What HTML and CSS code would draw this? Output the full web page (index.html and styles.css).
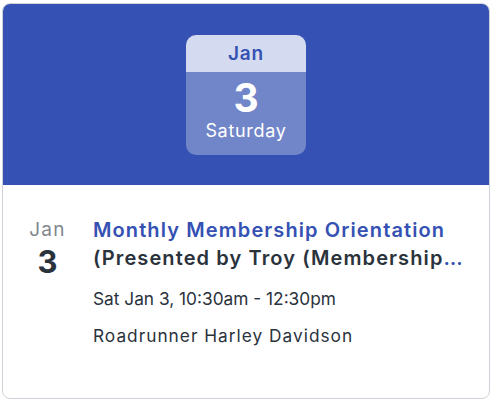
FILE: index.html
```html
<!DOCTYPE html>
<html>
<head>
<meta charset="utf-8">
<link rel="stylesheet" href="styles.css">
</head>
<body>
<div class="card">
  <div class="hero">
    <div class="cal">
      <div class="cal-month">Jan</div>
      <div class="cal-body">
        <div class="cal-day">3</div>
        <div class="cal-weekday">Saturday</div>
      </div>
    </div>
  </div>
  <div class="content">
    <div class="date">
      <div class="date-month">Jan</div>
      <div class="date-day">3</div>
    </div>
    <div class="info">
      <div class="title">Monthly Membership Orientation</div>
      <div class="title title-more"><span class="title-sub">(Presented by Troy (Membership Director))</span></div>
      <div class="line time">Sat Jan 3, 10:30am - 12:30pm</div>
      <div class="line place">Roadrunner Harley Davidson</div>
    </div>
  </div>
</div>
</body>
</html>
```

FILE: styles.css
```css
html, body {
  margin: 0;
  padding: 0;
  background: #ffffff;
}
body {
  padding: 3px 8px 3px 2px;
  font-family: Inter, "Noto Sans", sans-serif;
}
.card {
  box-sizing: border-box;
  width: 488px;
  height: 396px;
  border: 1px solid #cfd3d9;
  border-radius: 8px;
  overflow: hidden;
  display: flex;
  flex-direction: column;
}
.hero {
  background: #3451b3;
  height: 181px;
  display: flex;
  justify-content: center;
  padding-top: 31px;
  box-sizing: border-box;
}
.cal {
  width: 120px;
  height: 120px;
  border-radius: 10px;
  overflow: hidden;
  display: flex;
  flex-direction: column;
}
.cal-month {
  height: 37px;
  background: #d4dbf0;
  color: #3451b3;
  font-weight: 600;
  font-size: 19px;
  letter-spacing: 0.9px;
  line-height: 37px;
  text-align: center;
}
.cal-body {
  flex: 1;
  background: #7185c9;
  color: #ffffff;
  text-align: center;
  display: flex;
  flex-direction: column;
  align-items: center;
}
.cal-day {
  font-size: 39px;
  font-weight: 700;
  line-height: 46px;
  margin-top: 3px;
}
.cal-weekday {
  font-size: 18px;
  letter-spacing: 0.7px;
  line-height: 22px;
  margin-top: -1px;
}
.content {
  display: flex;
  padding: 31px 23px 0 18px;
  gap: 19px;
}
.date {
  width: 53px;
  text-align: center;
  flex: none;
}
.date-month {
  color: #80868e;
  font-size: 19px;
  letter-spacing: 1.2px;
  line-height: 28px;
}
.date-day {
  color: #2a323c;
  font-size: 31px;
  font-weight: 700;
  line-height: 36px;
}
.info {
  flex: 1;
  min-width: 0;
}
.title {
  color: #3451b3;
  font-size: 20px;
  font-weight: 600;
  letter-spacing: 1.1px;
  line-height: 28px;
  white-space: nowrap;
  overflow: hidden;
  text-overflow: ellipsis;
}
.title-sub {
  color: #2a323c;
}
.line {
  color: #2a323c;
  font-size: 17.3px;
  line-height: 24px;
}
.time {
  margin-top: 15px;
}
.place {
  margin-top: 13px;
  letter-spacing: 1px;
}
```
